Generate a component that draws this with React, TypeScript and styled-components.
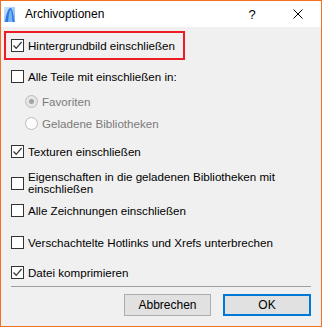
import React from "react";
import styled, { createGlobalStyle } from "styled-components";

const GlobalStyle = createGlobalStyle`
  body {
    margin: 0;
    background: #ffffff;
  }
  * {
    box-sizing: border-box;
  }
`;

const Window = styled.div`
  width: 322px;
  height: 327px;
  border: 1px solid #f37021;
  background: #f0f0f0;
  display: flex;
  flex-direction: column;
  font-family: "Liberation Sans", Arial, sans-serif;
  font-size: 11.6px;
  color: #000;
`;

const TitleBar = styled.div`
  height: 26px;
  background: #ffffff;
  display: flex;
  align-items: center;
  padding-left: 3px;
`;

const Title = styled.span`
  margin-left: 10px;
  font-size: 12px;
`;

const CaptionButton = styled.div`
  width: 46px;
  height: 26px;
  display: flex;
  align-items: center;
  justify-content: center;
  font-size: 13px;
`;

const Captions = styled.div`
  margin-left: auto;
  display: flex;
`;

const Content = styled.div`
  flex: 1;
  display: flex;
  flex-direction: column;
  padding: 4px 0 0;
`;

const Highlight = styled.div`
  width: 181px;
  height: 29px;
  margin-left: 3px;
  border: 2px solid #ed1c24;
  padding: 4px 0 0 5px;
  white-space: nowrap;
`;

interface RowProps {
  $top: number;
  $left: number;
}
const Row = styled.div<RowProps>`
  display: flex;
  align-items: center;
  margin-top: ${p => p.$top}px;
  margin-left: ${p => p.$left}px;
  margin-right: 12px;
  min-height: 13px;
`;

const Label = styled.span<{ $disabled?: boolean }>`
  margin-left: 4px;
  line-height: 12px;
  color: ${p => (p.$disabled ? "#7a7a7a" : "#000")};
`;

const Box = styled.div`
  flex: none;
  width: 13px;
  height: 13px;
  border: 1px solid #333333;
  background: #ffffff;
  display: flex;
  align-items: center;
  justify-content: center;
`;

const RadioCircle = styled.div<{ $on?: boolean }>`
  flex: none;
  width: 13px;
  height: 13px;
  border-radius: 50%;
  border: 1px solid #bcbcbc;
  background: ${p => (p.$on ? "#e6e6e6" : "#fcfcfc")};
  display: flex;
  align-items: center;
  justify-content: center;
`;

const Dot = styled.div`
  width: 5px;
  height: 5px;
  border-radius: 50%;
  background: #a3a3a3;
`;

const Separator = styled.div`
  height: 1px;
  background: #a0a0a0;
  margin: 7px 10px 0;
`;

const Buttons = styled.div`
  display: flex;
  justify-content: flex-end;
  gap: 12px;
  padding-right: 10px;
  margin-top: 7px;
`;

const Button = styled.button<{ $default?: boolean; $w: number }>`
  width: ${p => p.$w}px;
  height: 22px;
  background: #e1e1e1;
  border: ${p => (p.$default ? "2px solid #0078d7" : "1px solid #adadad")};
  font-family: "Liberation Sans", Arial, sans-serif;
  font-size: 12px;
  color: #000;
  padding: 0;
`;

const AppIcon = () => (
  <svg width="11" height="15" viewBox="0 0 11 15">
    <defs>
      <linearGradient id="bg" x1="0" y1="0" x2="1" y2="1">
        <stop offset="0" stopColor="#cfe3fb" />
        <stop offset="1" stopColor="#7fb2ef" />
      </linearGradient>
    </defs>
    <rect x="0" y="0" width="11" height="15" fill="url(#bg)" />
    <path d="M1 15 C2 8 4 1 6.5 1 C8.5 1 9.5 8 10.5 15 Z" fill="#2a7be0" />
    <path d="M4 15 C4.5 8 5.5 3 6.5 3 C7.5 3 8 8 8.5 15 Z" fill="#79b4f5" />
  </svg>
);

const CloseIcon = () => (
  <svg width="10" height="10" viewBox="0 0 10 10">
    <path d="M0.5 0.5 L9.5 9.5 M9.5 0.5 L0.5 9.5" stroke="#000" strokeWidth="1" />
  </svg>
);

const Check = () => (
  <svg width="11" height="11" viewBox="0 0 11 11">
    <path d="M1.5 5.5 L4.2 8.3 L9.6 2" fill="none" stroke="#3c3c3c" strokeWidth="1.3" />
  </svg>
);

const Checkbox = ({ checked }: { checked?: boolean }) => (
  <Box>{checked && <Check />}</Box>
);

const Radio = ({ on }: { on?: boolean }) => (
  <RadioCircle $on={on}>{on && <Dot />}</RadioCircle>
);

export default function App() {
  return (
    <>
      <GlobalStyle />
      <Window>
        <TitleBar>
          <AppIcon />
          <Title>Archivoptionen</Title>
          <Captions>
            <CaptionButton>?</CaptionButton>
            <CaptionButton>
              <CloseIcon />
            </CaptionButton>
          </Captions>
        </TitleBar>
        <Content>
          <Highlight>
            <Row $top={2} $left={0}>
              <Checkbox checked />
              <Label>Hintergrundbild einschließen</Label>
            </Row>
          </Highlight>
          <Row $top={10} $left={10}>
            <Checkbox />
            <Label>Alle Teile mit einschließen in:</Label>
          </Row>
          <Row $top={12} $left={24}>
            <Radio on />
            <Label $disabled>Favoriten</Label>
          </Row>
          <Row $top={9} $left={24}>
            <Radio />
            <Label $disabled>Geladene Bibliotheken</Label>
          </Row>
          <Row $top={15} $left={10}>
            <Checkbox checked />
            <Label>Texturen einschließen</Label>
          </Row>
          <Row $top={13} $left={10}>
            <Checkbox />
            <Label>
              Eigenschaften in die geladenen Bibliotheken mit einschließen
            </Label>
          </Row>
          <Row $top={9} $left={10}>
            <Checkbox />
            <Label>Alle Zeichnungen einschließen</Label>
          </Row>
          <Row $top={19} $left={10}>
            <Checkbox />
            <Label>Verschachtelte Hotlinks und Xrefs unterbrechen</Label>
          </Row>
          <Row $top={17} $left={10}>
            <Checkbox checked />
            <Label>Datei komprimieren</Label>
          </Row>
          <Separator />
          <Buttons>
            <Button $w={87}>Abbrechen</Button>
            <Button $w={88} $default>
              OK
            </Button>
          </Buttons>
        </Content>
      </Window>
    </>
  );
}
